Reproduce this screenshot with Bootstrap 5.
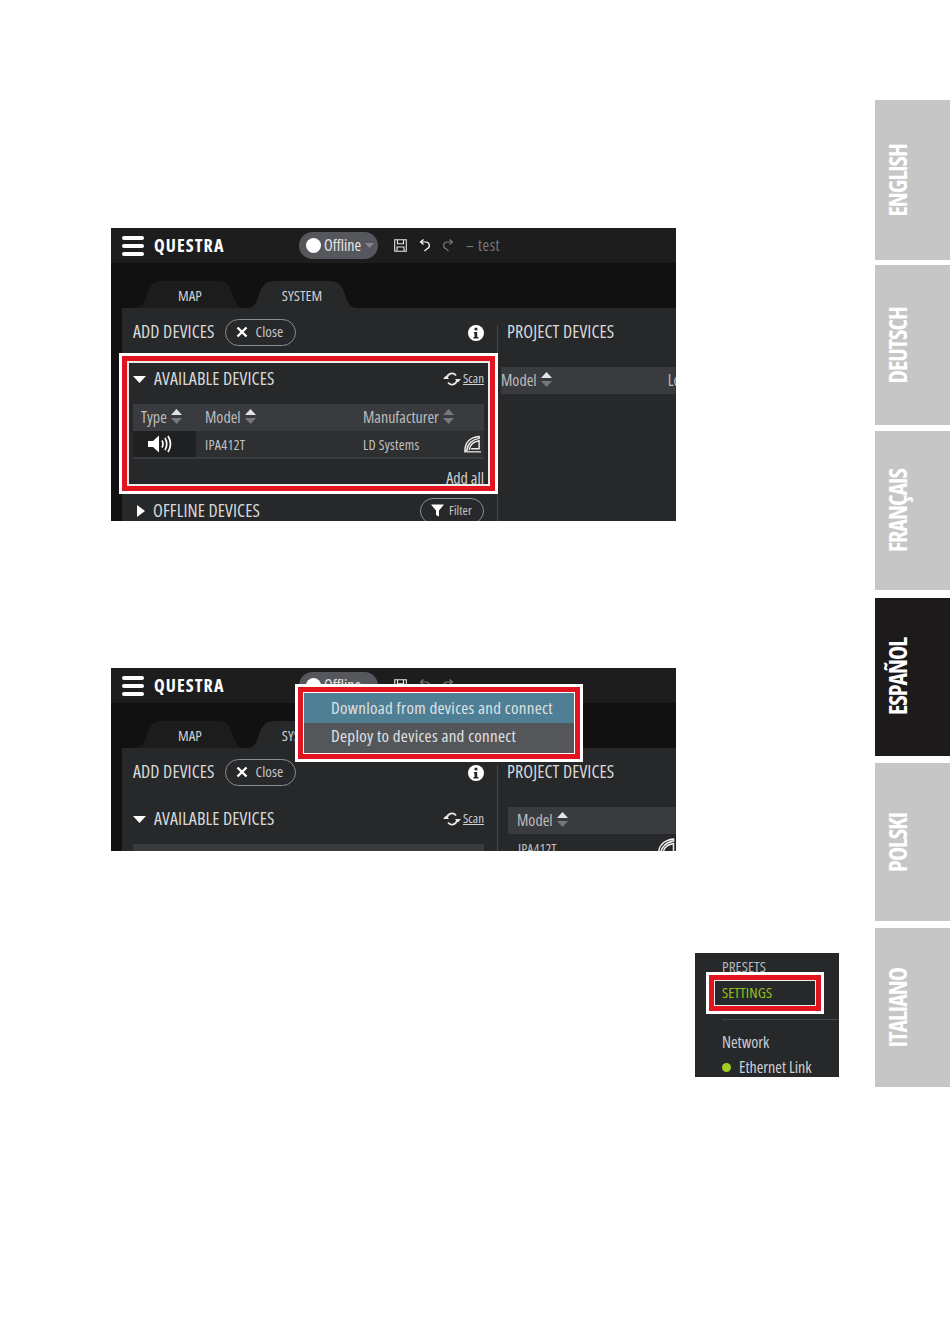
<!DOCTYPE html>
<html lang="es">
<head>
<meta charset="UTF-8" />
<title>Questra</title>
<link href="https://cdn.jsdelivr.net/npm/bootstrap@5.3.2/dist/css/bootstrap.min.css" rel="stylesheet" />
<style>
  body { background: #fff; width: 950px; height: 1318px; overflow: hidden; font-family: "Open Sans", sans-serif; font-stretch: 75%; }
  .page-wrap { width: 950px; height: 1318px; }
  .left-col { width: 875px; }
  .shot { position: relative; width: 565px; margin-left: 111px; background: #111112; overflow: hidden; color: #cfd0d2; }
  .shot svg { flex: none; }
  .shot-one { height: 293px; margin-top: 228px; }
  .shot-two { height: 183px; margin-top: 147px; }
  .shot-three { width: 144px; height: 124px; margin-top: 102px; margin-left: 695px; background: #27282a; }

  .top-bar { height: 35px; background: #1d1d1e; padding-left: 11px; }
  .burger { width: 22px; height: 20px; display: flex; flex-direction: column; justify-content: space-between; }
  .burger i { display: block; height: 4px; background: #fff; border-radius: 2px; }
  .brand { margin-left: 10px; width: 145px; color: #fff; font-size: 18px; font-weight: 700; letter-spacing: 1.1px; }
  .status-pill { width: 79px; height: 27px; border-radius: 14px; background: #55575c; padding: 0 0 1px 7px; color: #e4e5e6; font-size: 16px; }
  .status-dot { width: 15px; height: 15px; border-radius: 50%; background: #fff; margin-right: 3px; flex: none; }
  .tool-row { margin-left: 16px; gap: 11px; color: #76777a; font-size: 16px; letter-spacing: .5px; padding-bottom: 1px; }
  .flip-x { transform: scaleX(-1); }

  .tab-band { height: 45px; padding: 18px 0 0 24px; gap: 2px; }
  .tab-shape { width: 110px; height: 27px; font-size: 15px; text-align: center; line-height: 28px; background: #1c1c1d; clip-path: path('M0 27C7 27 9 22 12 14C15 4 19 0 27 0H83C91 0 95 4 98 14C101 22 103 27 110 27Z'); }
  .tab-shape.is-on { background: #27282a; }

  .panel { margin-left: 11px; background: #27282a; height: 300px; }
  .panel-left { width: 375px; padding: 11px 13px 0 11px; flex: none; }
  .panel-rule { width: 1px; height: 200px; margin-top: 17px; background: #46474a; flex: none; }
  .panel-right { flex: 1; min-width: 0; padding-top: 11px; }
  .panel-title { font-size: 18px; line-height: 25px; padding-bottom: 2px; color: #d8d9da; letter-spacing: .1px; white-space: nowrap; }
  .ghost-pill { height: 27px; border: 1px solid #8b8c8e; border-radius: 14px; font-size: 15px; color: #c4c5c7; }
  .close-pill { width: 71px; margin-left: 10px; padding: 0 0 2px 10px; gap: 8px; }
  .filter-pill { width: 64px; height: 26px; padding: 0 0 1px 10px; gap: 5px; font-size: 13px; }
  .section-row { height: 26px; margin-top: 20px; margin-bottom: 12px; }
  .section-row.is-closed { margin: 11px 0 0; }
  .scan-gap { margin-right: 2px; }
  .scan-link { font-size: 13px; color: #d0d1d3; text-decoration: underline; }
  .device-grid { display: grid; grid-template-columns: 63px 167px 1fr; }
  .head-cell { height: 27px; background: #3a3b3e; font-size: 16px; color: #bcbdbf; gap: 4px; padding-bottom: 2px; }
  .type-cell { padding-left: 8px; }
  .model-cell { padding-left: 9px; }
  .body-cell { height: 28px; background: #2e2f31; border-bottom: 2px solid #3a3b3e; font-size: 14px; letter-spacing: .25px; color: #c0c1c3; }
  .body-cell.is-type { background: #1f2021; justify-content: center; padding-right: 8px; }
  .brand-gap { margin-right: 3px; }
  .add-all { margin-top: 10px; height: 18px; text-align: right; font-size: 16px; line-height: 18px; color: #d0d1d3; text-decoration: underline; }

  .model-head { height: 27px; background: #3a3b3e; font-size: 16px; color: #bcbdbf; gap: 4px; margin-top: 21px; padding-bottom: 2px; white-space: nowrap; overflow: hidden; }
  .shot-one .model-head { margin-left: 3px; }
  .shot-two .model-head { margin-left: 10px; padding-left: 9px; }
  .loc-label { margin-left: 112px; }
  .project-title { padding-left: 9px; }
  .project-row { margin: 4px 0 0 20px; font-size: 14px; height: 20px; color: #c0c1c3; }

  .mark-box { position: absolute; border: 5px solid #e1141f; box-shadow: 0 0 0 3px #fff, inset 0 0 0 2px #ececec; pointer-events: none; }
  .mark-devices { left: 11px; top: 128px; width: 373px; height: 135px; }
  .mark-settings { left: 14px; top: 22px; width: 112px; height: 36px; box-shadow: 0 0 0 3px #fff, inset 0 0 0 1px #ececec; }

  .menu-pop { position: absolute; left: 184px; top: 16px; width: 288px; height: 78px; background: #fff; padding: 3px; }
  .menu-frame { border: 5px solid #e1141f; height: 100%; padding: 1px; }
  .menu-entry { height: 30px; padding-left: 27px; font-size: 17px; line-height: 29px; color: #dfe1e2; letter-spacing: .3px; white-space: nowrap; }
  .menu-entry.is-on { background: #4f7f94; }
  .menu-entry.is-off { background: #55565a; line-height: 26px; }

  .side-tabs { width: 75px; padding-top: 100px; }
  .lang-tab { width: 75px; height: 159px; background: #c6c6c6; padding-left: 12px; margin-bottom: 6px; color: #fff; font-size: 24px; font-weight: 700; letter-spacing: -1px; }
  .lang-tab span { writing-mode: vertical-rl; transform: rotate(180deg); line-height: 22px; }
  .lang-tab.is-on { background: #1d1a1b; }
  .lang-tab.is-tall { height: 160px; margin-bottom: 5px; }
  .lang-tab.is-tall.is-wide-gap { margin-bottom: 6px; }
  .lang-tab.is-gap { margin-bottom: 8px; }
  .lang-tab.is-short { height: 158px; margin-bottom: 7px; }

  .set-menu { padding: 3px 0 0 27px; font-size: 15px; line-height: 20px; letter-spacing: .1px; color: #b7b8ba; height: 66px; }
  .set-green { color: #93c01f; margin-top: 6px; }
  .set-rule { height: 1px; background: #45464a; margin-left: 27px; }
  .set-network { padding: 13px 0 0 27px; font-size: 16px; line-height: 18px; color: #cfd0d2; }
  .set-link { padding-top: 7px; gap: 8px; }
  .set-dot { width: 9px; height: 9px; border-radius: 50%; background: #a2cc23; flex: none; }
</style>
</head>
<body>
<svg width="0" height="0" class="d-block">
  <defs>
    <symbol id="sort-up" viewBox="0 0 11 15"><path d="M5.500 0 11 6H0z" fill="#e2e3e4"/><path d="M0 9h11l-5.500 6z" fill="#77787b"/></symbol>
    <symbol id="sort-dim" viewBox="0 0 11 15"><path d="M5.500 0 11 6H0z" fill="#77787b"/><path d="M0 9h11l-5.500 6z" fill="#77787b"/></symbol>
    <symbol id="x-mark" viewBox="0 0 12 12"><path d="M1.500 1.500l9 9M10.500 1.500l-9 9" stroke="#fff" stroke-width="2.400" fill="none"/></symbol>
    <symbol id="info-mark" viewBox="0 0 16 16"><circle cx="8" cy="8" r="8" fill="#fff"/><circle cx="8" cy="4" r="1.600" fill="#27282a"/><path d="M6 7h3.200v5H10.500v1.500h-5V12h1V8.500H6z" fill="#27282a"/></symbol>
    <symbol id="scan-mark" viewBox="0 0 18 14"><path d="M4 6a5 5 0 0 1 9-2.500M14 8a5 5 0 0 1-9 2.500" stroke="#e8e8e8" stroke-width="1.800" fill="none"/><path d="M0 7h6L3 3.500zM12 7h6l-3 3.500z" fill="#e8e8e8"/></symbol>
    <symbol id="brand-mark" viewBox="0 0 18 18"><path d="M1 16C1 8 6 2 16 1v2C9 4 3.500 9 3 16zM5.500 15.500C6 10 10 6.500 16 5.500V14H7.500" fill="none" stroke="#f0f0f0" stroke-width="1.500"/><path d="M0 17.300H18" stroke="#f0f0f0" stroke-width="1.300"/></symbol>
    <symbol id="cone-mark" viewBox="0 0 25 18"><path d="M0 6h5l6-5.500v17L5 12H0z" fill="#fff"/><path d="M14 5.500q2 3.500 0 7M17 3q3.500 6 0 12M20 1q5 8 0 16" stroke="#fff" stroke-width="1.700" fill="none"/></symbol>
    <symbol id="save-mark" viewBox="0 0 13 13"><path d="M.7.7h11.600v11.600H.7zM3.500.7v4h6v-4M3 12.300V8h7v4.300" stroke="#e6e6e6" stroke-width="1.100" fill="none"/></symbol>
    <symbol id="undo-mark" viewBox="0 0 13 13"><path d="M3.500 3h4.500a3.500 3.500 0 0 1 1 6.800L6.500 12M5.500.5 2.500 3l3 2.500" stroke="currentColor" stroke-width="1.200" fill="none"/></symbol>
    <symbol id="funnel-mark" viewBox="0 0 13 13"><path d="M0 .5h13L8 6.500v6l-3-1.500V6.500z" fill="#fff"/></symbol>
  </defs>
</svg>
<div class="page-wrap d-flex">
  <div class="left-col">

    <div class="shot shot-one">
      <div class="top-bar d-flex align-items-center">
        <div class="burger"><i></i><i></i><i></i></div>
        <div class="brand">QUESTRA</div>
        <div class="status-pill d-flex align-items-center"><span class="status-dot"></span>Offline<svg class="ms-1" width="9" height="5" viewBox="0 0 9 5"><path d="M0 0h9L4.500 5z" fill="#85878b"/></svg></div>
        <div class="tool-row d-flex align-items-center">
          <svg width="13" height="13"><use href="#save-mark"/></svg>
          <svg width="13" height="13" class="text-white"><use href="#undo-mark"/></svg>
          <svg width="13" height="13" class="flip-x"><use href="#undo-mark"/></svg>
          <span>– test</span>
        </div>
      </div>
      <div class="tab-band d-flex">
        <div class="tab-shape">MAP</div>
        <div class="tab-shape is-on">SYSTEM</div>
      </div>
      <div class="panel d-flex">
        <div class="panel-left">
          <div class="d-flex align-items-center">
            <span class="panel-title">ADD DEVICES</span>
            <span class="ghost-pill close-pill d-flex align-items-center"><svg width="12" height="12"><use href="#x-mark"/></svg>Close</span>
            <svg class="ms-auto" width="16" height="16"><use href="#info-mark"/></svg>
          </div>
          <div class="section-row d-flex align-items-center">
            <svg width="13" height="7" viewBox="0 0 13 7"><path d="M0 0h13L6.500 7z" fill="#fff"/></svg>
            <span class="panel-title ms-2">AVAILABLE DEVICES</span>
            <svg class="ms-auto scan-gap" width="18" height="14"><use href="#scan-mark"/></svg>
            <span class="scan-link">Scan</span>
          </div>
          <div class="device-grid">
            <div class="head-cell type-cell d-flex align-items-center">Type <svg width="11" height="15"><use href="#sort-up"/></svg></div>
            <div class="head-cell model-cell d-flex align-items-center">Model <svg width="11" height="15"><use href="#sort-up"/></svg></div>
            <div class="head-cell d-flex align-items-center">Manufacturer <svg width="11" height="15"><use href="#sort-dim"/></svg></div>
            <div class="body-cell is-type d-flex align-items-center"><svg width="25" height="18"><use href="#cone-mark"/></svg></div>
            <div class="body-cell model-cell d-flex align-items-center">IPA412T</div>
            <div class="body-cell d-flex align-items-center">LD Systems<svg class="ms-auto brand-gap" width="17" height="18"><use href="#brand-mark"/></svg></div>
          </div>
          <div class="add-all">Add all</div>
          <div class="section-row is-closed d-flex align-items-center">
            <svg class="ms-1" width="8" height="12" viewBox="0 0 8 12"><path d="M0 0l8 6-8 6z" fill="#fff"/></svg>
            <span class="panel-title ms-2">OFFLINE DEVICES</span>
            <span class="ghost-pill filter-pill d-flex align-items-center ms-auto"><svg width="13" height="13"><use href="#funnel-mark"/></svg>Filter</span>
          </div>
        </div>
        <div class="panel-rule"></div>
        <div class="panel-right">
          <div class="panel-title project-title">PROJECT DEVICES</div>
          <div class="model-head d-flex align-items-center">Model <svg width="11" height="15"><use href="#sort-up"/></svg><span class="loc-label">Lo</span></div>
        </div>
      </div>
      <div class="mark-box mark-devices"></div>
    </div>

    <div class="shot shot-two">
      <div class="top-bar d-flex align-items-center">
        <div class="burger"><i></i><i></i><i></i></div>
        <div class="brand">QUESTRA</div>
        <div class="status-pill d-flex align-items-center"><span class="status-dot"></span>Offline</div>
        <div class="tool-row d-flex align-items-center">
          <svg width="13" height="13"><use href="#save-mark"/></svg>
          <svg width="13" height="13"><use href="#undo-mark"/></svg>
          <svg width="13" height="13" class="flip-x"><use href="#undo-mark"/></svg>
        </div>
      </div>
      <div class="tab-band d-flex">
        <div class="tab-shape">MAP</div>
        <div class="tab-shape is-on">SYSTEM</div>
      </div>
      <div class="panel d-flex">
        <div class="panel-left">
          <div class="d-flex align-items-center">
            <span class="panel-title">ADD DEVICES</span>
            <span class="ghost-pill close-pill d-flex align-items-center"><svg width="12" height="12"><use href="#x-mark"/></svg>Close</span>
            <svg class="ms-auto" width="16" height="16"><use href="#info-mark"/></svg>
          </div>
          <div class="section-row d-flex align-items-center">
            <svg width="13" height="7" viewBox="0 0 13 7"><path d="M0 0h13L6.500 7z" fill="#fff"/></svg>
            <span class="panel-title ms-2">AVAILABLE DEVICES</span>
            <svg class="ms-auto scan-gap" width="18" height="14"><use href="#scan-mark"/></svg>
            <span class="scan-link">Scan</span>
          </div>
          <div class="head-cell"></div>
        </div>
        <div class="panel-rule"></div>
        <div class="panel-right">
          <div class="panel-title project-title">PROJECT DEVICES</div>
          <div class="model-head d-flex align-items-center">Model <svg width="11" height="15"><use href="#sort-up"/></svg></div>
          <div class="project-row d-flex align-items-start">IPA412T<svg class="ms-auto" width="19" height="18"><use href="#brand-mark"/></svg></div>
        </div>
      </div>
      <div class="menu-pop">
        <div class="menu-frame">
          <div class="menu-entry is-on">Download from devices and connect</div>
          <div class="menu-entry is-off">Deploy to devices and connect</div>
        </div>
      </div>
    </div>

    <div class="shot shot-three">
      <div class="set-menu">
        <div>PRESETS</div>
        <div class="set-green">SETTINGS</div>
      </div>
      <div class="set-rule"></div>
      <div class="set-network">
        <div>Network</div>
        <div class="set-link d-flex align-items-center"><span class="set-dot"></span>Ethernet Link</div>
      </div>
      <div class="mark-box mark-settings"></div>
    </div>
  </div>

  <div class="side-tabs">
    <div class="lang-tab is-tall d-flex align-items-center"><span>ENGLISH</span></div>
    <div class="lang-tab is-tall is-wide-gap d-flex align-items-center"><span>DEUTSCH</span></div>
    <div class="lang-tab is-gap d-flex align-items-center"><span>FRANÇAIS</span></div>
    <div class="lang-tab is-on is-short d-flex align-items-center"><span>ESPAÑOL</span></div>
    <div class="lang-tab is-short d-flex align-items-center"><span>POLSKI</span></div>
    <div class="lang-tab d-flex align-items-center"><span>ITALIANO</span></div>
  </div>
</div>
<script src="https://cdn.jsdelivr.net/npm/bootstrap@5.3.2/dist/js/bootstrap.bundle.min.js"></script>
</body>
</html>
